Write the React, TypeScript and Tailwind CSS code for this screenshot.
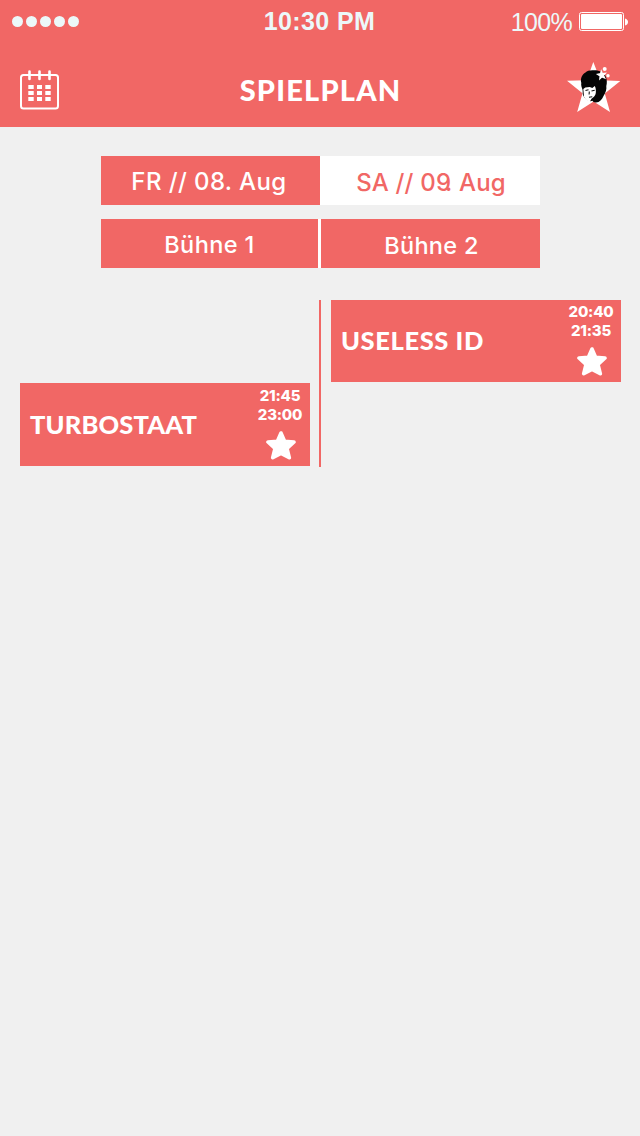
import React from "react";

function CalendarIcon() {
  return (
    <svg width="40" height="40" viewBox="0 0 40 40" fill="none" stroke="#fff" className="block">
      <rect x="1" y="5" width="37" height="33.5" rx="2.5" strokeWidth="2" />
      <path d="M9.5 1.5v7.5M19.5 1.5v7.5M29.5 1.5v7.5" strokeWidth="2.6" strokeLinecap="round" />
      <path d="M8.3 17h5.4M17 17h5M25.3 17h5.4M8.3 23h5.4M17 23h5M25.3 23h5.4M8.3 29h5.4M17 29h5M25.3 29h5.4" strokeWidth="3.8" />
    </svg>
  );
}

function LogoIcon() {
  return (
    <svg width="54" height="51" viewBox="567 61 54 51" className="block">
      <path d="M593.3 62L600.5 80.3L620.300 81L604.800 93.500L610 112L593.600 101.500L577.200 112L582.500 93.300L567 80.800L586.800 80.300Z" fill="#fff" />
      <path d="M581.300 83c-1.200-4.500.8-8.500 4.200-10.500 1.500-1.800 4.500-2.500 8-2.300 6-.2 10.500 2 12.300 6.500 1.200 2.600 1.400 6.300.5 9.300.5 3-.6 7-2.800 10-1.500 3.500-4 6.500-7.500 6.500-1.500.2-3-.6-3.500-1.700l-2 .4c-3-.8-5.800-2.300-7.200-5.500-1-2-.3-4.500-.9-6.500-.7-2-1.600-4-1.100-6.200z" fill="#050505" />
      <path d="M583.300 89l2-1.500 4.500-.5 2.500 1 2.500-2c1 2 1.300 4.500 1 7-.3 2.300-2 4.300-4.300 5.700l-1.700 3c-2.500-.8-4.800-2.300-5.800-5z" fill="#fff" />
      <path d="M585.500 90.500l3-.7M591.500 91l3.200-.8M589.300 91.500l-.2 3M589 97.300l3.300-.6" stroke="#111" strokeWidth="1.100" fill="none" />
      <path d="M601.300 71l1.200 2.500 3-.3-2 2.200 1.300 2.700-2.800-1.200-2.200 2 .3-3-2.600-1.600 3-.6z" fill="#fff" stroke="#fff" strokeWidth="1.200" />
      <circle cx="604.700" cy="69" r="2" fill="#fff" />
      <circle cx="608" cy="75.800" r="1.700" fill="#fff" />
    </svg>
  );
}

function StarIcon() {
  return (
    <svg width="30" height="29" viewBox="0 0 30 29" className="block">
      <path
        d="M15 2L18.600 10.300L28 11L21 17.500L23.300 26.700L15 22.300L6.700 26.700L9 17.500L2 11L11.400 10.300Z"
        fill="#fff"
        stroke="#fff"
        strokeWidth="3.600"
        strokeLinejoin="round"
      />
    </svg>
  );
}

function Show({ name, from, to, nameClass, timeClass }: { name: string; from: string; to: string; nameClass: string; timeClass: string }) {
  return (
    <article className="flex w-[290px] justify-between bg-[#f16765] text-white">
      <h2 className={`ml-[10px] self-center whitespace-nowrap font-['Lato',sans-serif] text-[25.500px] font-black leading-8 ${nameClass}`}>{name}</h2>
      <div className={`flex w-[58px] flex-col items-center text-[15px] font-extrabold leading-[18.500px] tracking-[-0.2px] ${timeClass}`}>
        <span className="pr-[2px]">{from}</span>
        <span className="pr-[2px]">{to}</span>
        <div className="mt-[7px]">
          <StarIcon />
        </div>
      </div>
    </article>
  );
}

export default function App() {
  return (
    <div className="h-[1136px] w-[640px] overflow-hidden bg-[#f0f0f0] font-['Inter',sans-serif]">
      <header className="h-[126.500px] bg-[#f16765] text-white">
        <div className="grid h-[43px] grid-cols-3 items-center font-['Liberation_Sans',sans-serif] text-[#ecf8f9]">
          <div className="flex gap-[3px] pb-px pl-3">
            {[0, 1, 2, 3, 4].map((dot) => (
              <span key={dot} className="size-[11px] rounded-full bg-[#ecf8f9]" />
            ))}
          </div>
          <div className="pb-[2px] pr-px text-center text-[25px] font-bold leading-[41px] tracking-[0.400px]">10:30 PM</div>
          <div className="flex items-center justify-end pr-3">
            <span className="pt-px text-[25px] leading-[43px] tracking-[-0.7px]">100%</span>
            <svg width="49" height="20" viewBox="0 0 49 20" className="ml-[7px] block">
              <rect x=".5" y=".5" width="44" height="18" rx="2" fill="none" stroke="#fff" />
              <rect x="2" y="2" width="41" height="15" rx="1" fill="#fff" />
              <path d="M46 6.500q3 1 3 3.500t-3 3.500z" fill="#fff" />
            </svg>
          </div>
        </div>
        <div className="grid grid-cols-[1fr_auto_1fr] items-center pl-5 pr-[19px] pt-[18px]">
          <div className="pt-[6px]"><CalendarIcon /></div>
          <h1 className="pt-[7px] font-['Lato',sans-serif] text-[29px] font-black leading-9 tracking-[1.200px]">SPIELPLAN</h1>
          <div className="justify-self-end"><LogoIcon /></div>
        </div>
      </header>

      <main>
        <nav className="ml-[101px] mt-[29.500px] grid h-[49px] w-[439px] grid-cols-[219px_220px] text-[24px] font-medium leading-[44px]">
          <button className="bg-[#f16765] pr-[3px] pt-[3px] text-center tracking-[0.400px] text-white">FR // 08. Aug</button>
          <button className="bg-white pl-[2px] pt-[5px] text-center tracking-[0.200px] text-[#f16765]">
            SA // 0<span className="tracking-[-6px]">9</span>. Aug
          </button>
        </nav>
        <nav className="ml-[101px] mt-[14px] grid h-[49px] w-[439px] grid-cols-[217px_219px] gap-[3px] bg-white text-[23.500px] font-medium leading-[44px] text-white">
          <button className="bg-[#f16765] pt-[3px] text-center tracking-[0.400px]">Bühne 1</button>
          <button className="bg-[#f16765] pl-[2px] pt-[5px] text-center tracking-[0.300px]">Bühne 2</button>
        </nav>

        <section className="mt-8 grid grid-cols-[290px_2px_290px] gap-x-[9px] pl-5">
          <div className="grid h-[166px] pt-[83px]">
            <Show name="TURBOSTAAT" from="21:45" to="23:00" nameClass="pb-px tracking-[0.150px]" timeClass="pt-[4px]" />
          </div>
          <div className="h-[167px] bg-[#f16765]" />
          <div className="ml-px grid h-[82px]">
            <Show name="USELESS ID" from="20:40" to="21:35" nameClass="pb-[2px] tracking-[0.600px]" timeClass="pt-[3px]" />
          </div>
        </section>
      </main>
    </div>
  );
}
